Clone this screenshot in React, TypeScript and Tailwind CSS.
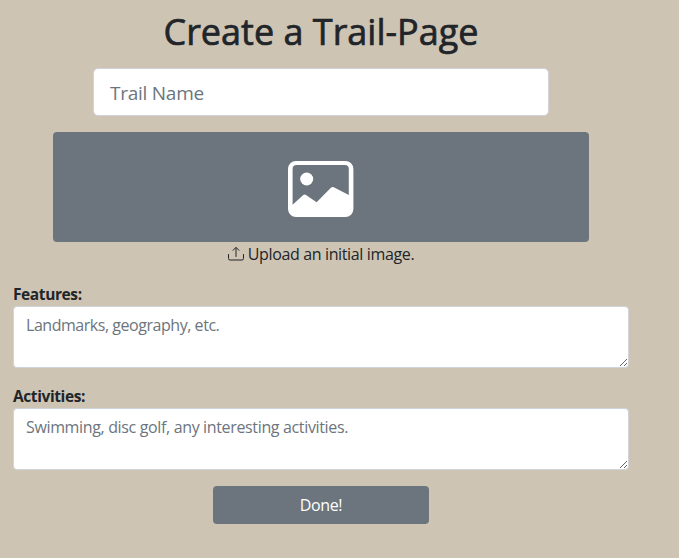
import React from "react";

const field =
  "block w-full border border-[#ced4da] bg-white text-[#495057] outline-none placeholder:text-[#6c757d] placeholder:opacity-100";

function PictureIcon() {
  return (
    <svg width="65.4" height="56" viewBox="0 0 65.4 56" fill="#fff" aria-hidden="true">
      <path
        fillRule="evenodd"
        d="M8 0H57.4a8 8 0 0 1 8 8V48a8 8 0 0 1-8 8H8a8 8 0 0 1-8-8V8a8 8 0 0 1 8-8ZM8.6 4a4 4 0 0 0-4 4V43.7L15 34.3a2.4 2.4 0 0 1 3-.2L28.6 41.3 42.9 26.8a2.4 2.4 0 0 1 2.9-.5L60.8 34V8a4 4 0 0 0-4-4Z"
      />
      <circle cx="18.7" cy="18" r="6.5" />
    </svg>
  );
}

function UploadIcon() {
  return (
    <svg width="16" height="16" viewBox="0 0 16 16" fill="none" stroke="#212529" strokeLinecap="round" strokeLinejoin="round" aria-hidden="true">
      <path d="M.5 8.5V12.5a1.5 1.5 0 0 0 1.5 1.5H14a1.5 1.5 0 0 0 1.5-1.5V8.5" />
      <path d="M5 4.35 8 1.35l3 3M8 2V10.5" />
    </svg>
  );
}

function Area({ label, placeholder, tracking }: { label: string; placeholder: string; tracking: string }) {
  return (
    <label className="mb-4 block">
      <span className="block h-6 text-[15.5px] leading-6 font-bold tracking-[-0.4px]">{label}</span>
      <textarea
        className={field + " h-[62px] resize-y rounded px-3 py-1.5 text-base leading-6 " + tracking}
        placeholder={placeholder}
      />
    </label>
  );
}

export default function App() {
  return (
    <main className="h-[558px] overflow-hidden bg-[#cec4b3] pt-2 pl-[13px] font-['Open_Sans','Noto_Sans',sans-serif] text-[#212529]">
      <form className="flex w-[616px] flex-col">
        <h1 className="mb-3 text-center text-[36px] leading-[48px] font-medium [-webkit-text-stroke:0.7px_#212529]">
          Create a Trail-Page
        </h1>
        <input
          className={field + " mx-auto h-12 max-w-[456px] rounded-[5px] px-4 pt-px text-[19px] tracking-[-0.25px]"}
          placeholder="Trail Name"
        />
        <div className="mx-auto mt-4 flex h-[110px] w-[536px] items-center justify-center rounded bg-[#6c757d] pt-1">
          <PictureIcon />
        </div>
        <div className="mb-4 flex h-6 items-center justify-center gap-1 text-base leading-6 tracking-[-0.36px]">
          <UploadIcon />
          <span>Upload an initial image.</span>
        </div>
        <Area label="Features:" placeholder="Landmarks, geography, etc." tracking="tracking-[-0.46px]" />
        <Area label="Activities:" placeholder="Swimming, disc golf, any interesting activities." tracking="tracking-[-0.35px]" />
        <button type="button" className="mx-auto h-[38px] w-[216px] rounded bg-[#6c757d] text-base tracking-[-0.4px] text-white">
          Done!
        </button>
      </form>
    </main>
  );
}
